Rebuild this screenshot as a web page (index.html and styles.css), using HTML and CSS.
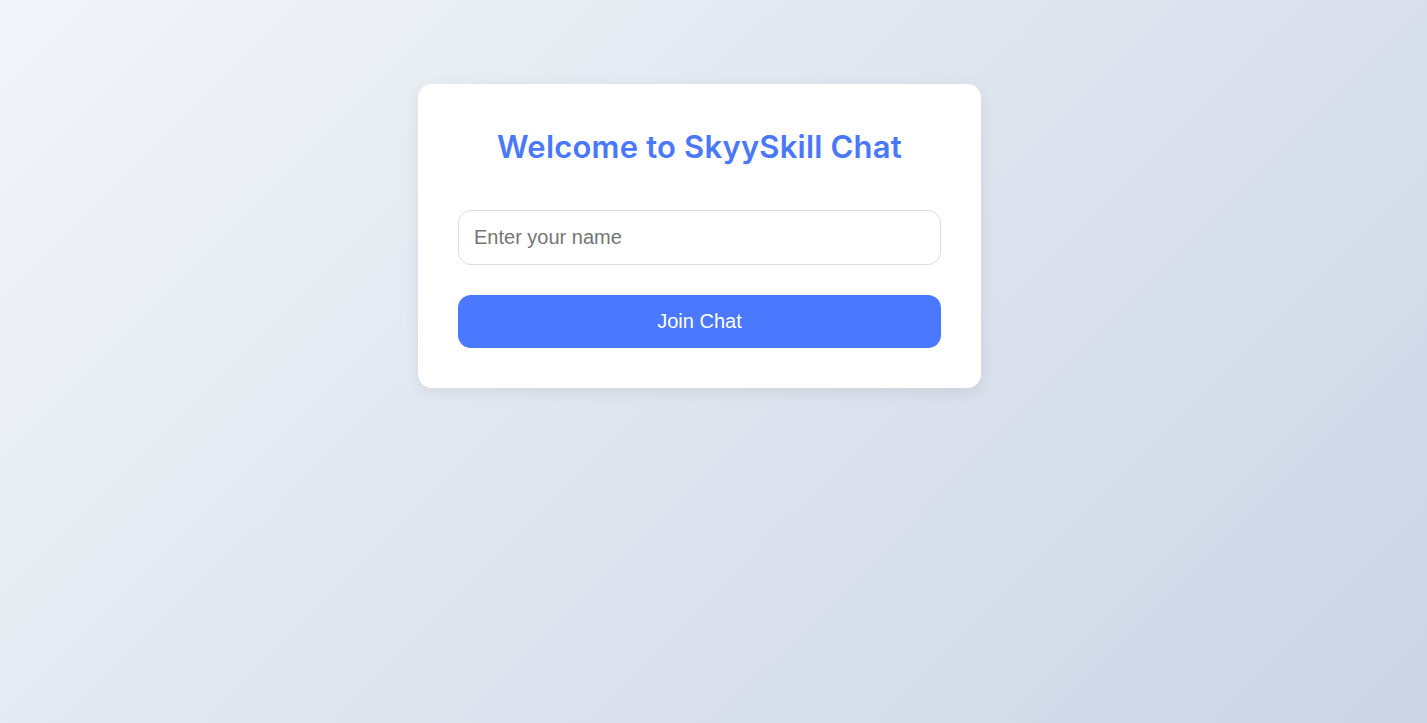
FILE: index.html
```html
<!DOCTYPE html>
<html lang="en">
<head>
<meta charset="UTF-8">
<title>SkyySkill Chat</title>
<link rel="stylesheet" href="styles.css">
</head>
<body>
<main class="page">
  <section class="card">
    <h1 class="title">Welcome to SkyySkill Chat</h1>
    <input class="name-input" type="text" placeholder="Enter your name">
    <button class="join-btn" type="button">Join Chat</button>
  </section>
</main>
</body>
</html>
```

FILE: styles.css
```css
* { box-sizing: border-box; }
html, body { height: 100%; }
body {
  margin: 0;
  font-family: "Liberation Sans", Arial, sans-serif;
  background: linear-gradient(135deg, #f2f5f9 0%, #cbd5e5 100%);
}
.page {
  min-height: 100%;
  display: flex;
  justify-content: center;
  align-items: flex-start;
  padding: 84px 28px 0 0;
}
.card {
  width: 563px;
  background: #ffffff;
  border-radius: 14px;
  padding: 40px;
  box-shadow: 0 4px 16px rgba(0, 0, 0, 0.08);
  display: flex;
  flex-direction: column;
}
.title {
  margin: 0 0 40px;
  text-align: center;
  font-family: Inter, "Noto Sans", sans-serif;
  font-weight: 600;
  font-size: 31px;
  line-height: 46px;
  color: #4a78fb;
  letter-spacing: 0.2px;
}
.name-input {
  height: 55px;
  width: 100%;
  border: 1px solid #dcdcdc;
  border-radius: 13px;
  padding: 0 15px;
  font-family: "Liberation Sans", Arial, sans-serif;
  font-size: 20px;
  color: #333;
  outline: none;
  margin-bottom: 30px;
}
.name-input::placeholder { color: #757575; }
.join-btn {
  height: 53px;
  width: 100%;
  border: none;
  border-radius: 13px;
  background: #4a78fe;
  color: #ffffff;
  font-family: "Liberation Sans", Arial, sans-serif;
  font-size: 20px;
  cursor: pointer;
}
```
